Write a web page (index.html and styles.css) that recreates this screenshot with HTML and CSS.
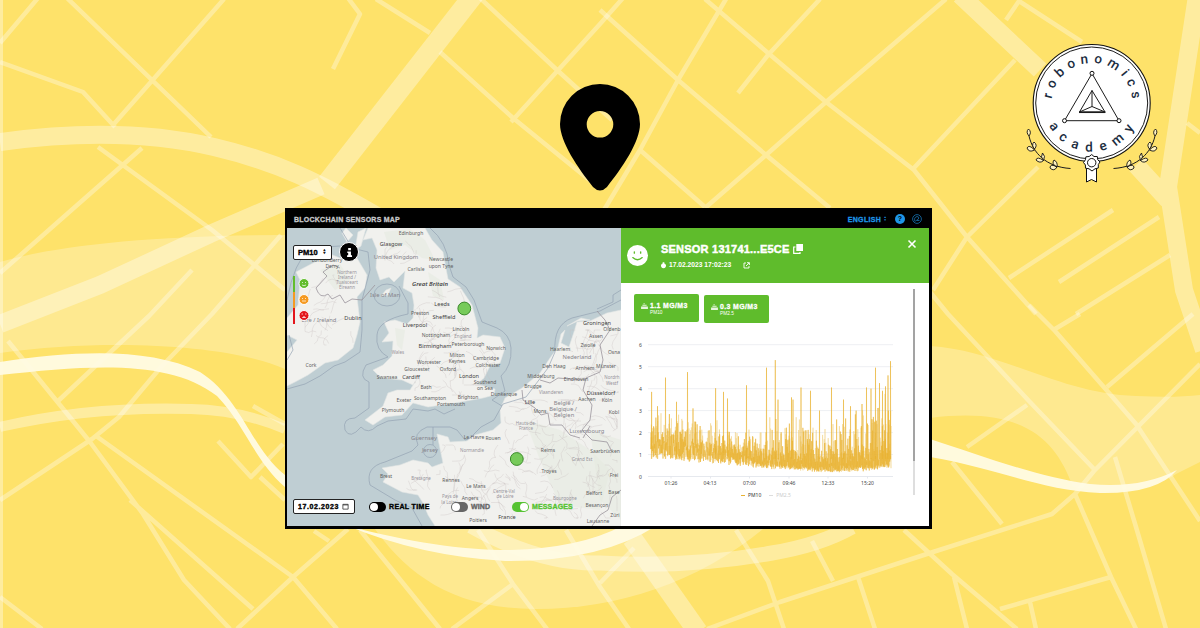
FILE: index.html
```html
<!DOCTYPE html>
<html lang="en">
<head>
<meta charset="utf-8">
<title>Blockchain Sensors Map</title>
<link rel="stylesheet" href="styles.css">
</head>
<body>
<svg class="backdrop" viewBox="0 0 1200 628" aria-hidden="true">
  <g class="river">
    <path d="M0 262Q90 236 285 235V369C230 345 110 338 0 353Z"/>
    <path d="M372 525C405 572 450 609 536 609C620 609 700 582 768 525Z"/>
    <path d="M930 346C1000 350 1060 394 1136 396Q1175 398 1200 395V462L1176 474C1150 492 1100 494 1073 487C1056 440 1025 406 930 418Z"/>
  </g>
  <g class="streets">
    <path d="M0 43L38-2M67-2L211 137M224-1L113 125M0 62L83 92L115 127M348-2L360 14L333 69M376-1L430 33M440 52L513 118L598 187M480-2L557 70L612 120M623-2L600 24L511 122M98 147L212 230L285 290M142 148L0 273M192 270L149 316L57 402M281 235L212 314L161 367L119 417L92 439L0 500M8 341L90 442L143 514L184 580L230 629M130 500L253 609M96 436L293 577L337 629M237 629L293 577L348 529M0 597L42 629M218 441L251 477L283 444M253 406L285 424M260 477L285 500M314 531L329 541M360 530L440 629M478 530L513 584L547 629M452 629L513 584M566 530L600 587L629 629"/>
    <path d="M600 10L678 80L766 155L830 208M705-1L768 53L826 102L914 170L967 237L1036 314M726-1L678 80L640 150L705 207M820-1L768 55L738 93M946-1L826 102L766 155L705 208M1015 60L912 170M1006 20L1019 1L1082 42M1038 167L967 237L933 290M1113 210L1009 278M1159 217L1059 282M1170 255L1076 314M1187 123L1200 133M640 150L592 230"/>
    <path d="M736 530L768 581L784 629M707 629L780 602L933 552L1052 514L1075 494L1094 471L1200 364M812 541L833 581M858 577L875 629M904 530L952 574L1017 629M954 577L967 629M1000 609L1111 577M1030 602L1036 629M1075 494L1111 577L1136 629M1115 457L1136 527L1166 629M930 292L948 314L1029 401L1094 469M1027 405L967 447M952 462L1002 524M1029 305L1055 331L1136 424L1200 521M1055 329L1080 314M1193 314L1107 387M600 583L634 548"/>
  </g>
  <g class="avenues">
    <path class="w18" d="M0 142C80 131 150 132 214 147S320 183 377 216"/>
    <path class="w20" d="M476-8L327 183"/>
    <path class="w18" d="M321 186L210 234L100 285L0 324"/>
    <path class="w10" d="M0 427Q90 406 191 409Q240 410 285 429"/>
    <path class="w18" d="M960-5L1040 70M1197-4L1168 187L1184 290L1204 350M1136 165L1168 200"/>
    <path class="w14" d="M471 526Q540 565 600 563Q690 568 772 553Q820 545 852 527"/>
    <path class="w20" d="M632 538L698 632"/>
    <path class="w4" d="M1.5 0V628"/>
  </g>
  <path class="stream" d="M0 362C80 350 150 348 200 372C242 399 250 447 285 475V487C254 460 245 425 217 396C170 359 90 365 0 375Z"/>
  <path class="stream" d="M348 526C410 542 460 550 510 550Q580 548 622 526L656 526Q600 562 505 561Q420 556 348 526Z"/>
  <path class="stream" d="M930 439C980 455 1040 478 1090 484Q1140 489 1177 470Q1157 494 1100 493C1040 490 1000 469 930 457Z"/>
</svg>

<svg class="pin" viewBox="0 0 80 107" aria-hidden="true">
  <path fill-rule="evenodd" d="M40 0A40 40 0 0 0 0 40C0 58 18 84 33 103Q40 110 47 103C62 84 80 58 80 40A40 40 0 0 0 40 0ZM40 27A13.300 13.300 0 1 1 40 53.600A13.300 13.300 0 0 1 40 27Z"/>
</svg>

<svg class="logo" viewBox="1022 40 140 146">
  <defs>
    <path id="arc-top" d="M1051.500 103.500A40.500 40.500 0 0 1 1132.500 103.500"/>
    <path id="arc-low" d="M1043.500 103A48.500 48.500 0 0 0 1140.500 103"/>
  </defs>
  <circle class="disc" cx="1091.700" cy="103" r="58.500"/>
  <circle class="line" cx="1091.700" cy="103" r="56"/>
  <text class="ring top"><textPath href="#arc-top" startOffset="52%">robonomics</textPath></text>
  <text class="ring low"><textPath href="#arc-low" startOffset="52%">academy</textPath></text>
  <path class="line" d="M1092 73.500L1064.500 120.700H1119ZM1092 90.500L1079.500 112H1105ZM1092 90.500V106.500L1079.500 112M1092 106.500L1105 112"/>
  <path class="line bold" d="M1079 112.300H1105.500"/>
  <g class="node"><circle cx="1092" cy="73.300" r="2"/><circle cx="1064.500" cy="120.700" r="2"/><circle cx="1119" cy="120.700" r="2"/></g>
  <g id="branch" class="line">
    <path d="M1029 136C1033 153 1046 167 1070.500 168.500"/>
    <path class="leaf" d="M1029 136Q1025.500 132 1028.500 129Q1032 132 1029 136ZM1034.500 150Q1029 144 1027 148Q1029 153 1034.500 150ZM1034.500 149Q1038 145 1034 142Q1031 145 1034.500 149ZM1043.500 160.500Q1037 156 1036 160Q1040 164 1043.500 160.500ZM1043.500 160.500Q1046 156 1042.500 153Q1040 157 1043.500 160.500ZM1057 167Q1050 163 1050 168Q1054 172 1057 167ZM1057 167Q1058 162 1054 160Q1051 164 1057 167Z"/>
  </g>
  <use href="#branch" transform="translate(2184 0) scale(-1 1)"/>
  <path class="leaf" d="M1086.500 168V182L1091.500 179.500L1096.500 182V168Z"/>
  <path class="leaf" d="M1091.700 154.500L1094 156.500L1097.300 156.500L1097.800 159.800L1100 162L1098.300 164.500L1098.300 168L1095 168.800L1092 171L1089 168.800L1085.500 168.200L1085.400 165L1083.500 162.500L1085.400 159.800L1085.900 156.800L1089.200 156.500Z"/>
  <circle class="leaf" cx="1091.700" cy="162.700" r="4.200"/>
</svg>

<main class="window">
  <header class="topbar">
    <h1>BLOCKCHAIN SENSORS MAP</h1>
    <nav>
      <span class="lang">ENGLISH</span><span class="updown">▴<br>▾</span>
      <span class="help">?</span>
      <svg class="swirl" viewBox="0 0 10 10"><circle cx="5" cy="5" r="4.400"/><path d="M3 7.500Q1.500 3.500 5 2.500Q7.500 2.500 6.500 5L3.500 7M5 6.500L7.500 6.500"/></svg>
    </nav>
  </header>
  <div class="content">
    <section class="mapview">
      <svg class="map" viewBox="287 228 334 298">
        <g class="land">
          <path d="M368 228L363 240L372 238L377 250L376 268L380 280L389 277L394 282L405 271L403 288L412 293L414 305L413 318L407 324L395 320L384 322L389 333L382 342L393 341L392 356L383 365L373 370L381 378L402 380L413 385L417 379L410 390L397 390L388 393L383 406L365 420L373 425L385 417L402 415L413 403L428 407L455 403L483 398L494 395L495 389L477 384L484 378L490 366L500 363L505 348L500 337L483 335L477 338L478 328L472 305L460 287L448 279L443 252L432 240L425 228Z"/>
          <path d="M315 262L330 254L345 260L357 258L367 275L365 288L357 297L360 322L357 335L353 348L338 360L325 363L308 375L295 382L287 386V352L297 340L287 335V318L298 305L300 280L296 272Z"/>
          <path d="M621 310L607 313L590 321L577 322L574 332L569 347L561 343L565 330L561 334L558 347L550 358L540 373L522 388L505 398L500 410L501 423L493 430L475 435L467 441L450 442L448 437L437 434L443 463L432 467L428 463L413 460L400 465L382 468L388 474L383 482L402 492L418 495L423 503L428 515L435 526H621Z"/>
          <path d="M381 296L386 290L391 288L388 295ZM346 228L353 235L347 242L342 233ZM358 232L366 228L361 246L355 250ZM567 326L578 321L590 320L581 318Z"/>
        </g>
        <g class="hills">
          <path d="M384 232L410 229L425 240L435 260L422 258L405 245L390 250Z"/><path d="M428 272L440 280L444 300L433 296Z"/><path d="M395 328L405 330L402 350L397 345Z"/>
          <path d="M525 420L560 430L590 450L610 470L600 510L560 505L540 460Z"/><path d="M590 430L621 440V520L600 500Z"/><path d="M320 270L340 264L350 280L335 290Z"/>
        </g>
        <g class="roads" id="roads"></g>
        <g class="limits">
          <path d="M340 228L352 248L368 252L370 270L362 300L362 330L360 352L345 362L334 366L320 376L305 384L287 389"/>
          <path d="M287 300Q294 262 310 248L340 246M430 228Q447 242 449 265L453 277L466 287L474 300L482 322L497 328Q510 334 511 348Q512 366 501 376L505 391L492 400L502 406"/>
          <path d="M503 404L494 420L481 427L470 438L465 440L457 430L450 427L427 427Q412 433 418 445L412 451L385 462Q365 467 370 485L395 500L412 508L422 526M433 427V445M503 404L526 397L548 368L555 352Q553 325 572 318L600 311L621 300"/>
          <path d="M455 409L444 414L435 409L428 411L413 409L406 419L388 421L377 426Q368 435 361 427Q350 440 345 430Q342 418 355 418L369 408V382Q358 378 366 365L388 357Q375 350 377 335Q378 320 408 314L408 303L399 286"/>
          <ellipse cx="387" cy="295" rx="13" ry="11"/><circle cx="430" cy="451" r="6.500"/>
          <path d="M621 290L613 295V302L597 309"/><path d="M287 360L293 350L289 335"/>
        </g>
        <g class="borders">
          <path d="M316 288L327 276L323 272L333 265L340 268M316 288Q320 300 328 294L332 299L340 295L345 303L352 299L362 300L375 285M597 311L605 320L610 330L600 345L603 360L600 372L586 378L583 390L592 405L590 420L582 430L592 440L607 442L612 452M540 380L550 383L558 378L583 380M522 390L523 400L535 408L541 415L548 413L550 425L562 425L570 435L580 438M583 438L590 426M592 526L600 515L608 510L612 497L621 490"/>
        </g>
        <g class="labels">
          <text x="411" y="235">Edinburgh</text><text x="391" y="246" class="c">Glasgow</text><text x="396" y="259" class="u">United Kingdom</text>
          <text x="441" y="261">Newcastle</text><text x="441" y="268">upon Tyne</text><text x="416" y="271">Carlisle</text>
          <text x="430" y="286" class="gb">Great Britain</text><text x="385" y="297" class="u">Isle of Man</text><text x="442" y="306" class="c">Leeds</text>
          <text x="420" y="315">Preston</text><text x="444" y="319" class="c">Sheffield</text><text x="415" y="327" class="c">Liverpool</text><text x="461" y="331">Lincoln</text>
          <text x="436" y="337">Nottingham</text><text x="463" y="338" class="t">England</text><text x="435" y="348" class="c">Birmingham</text><text x="468" y="346">Peterborough</text>
          <text x="496" y="350">Norwich</text><text x="429" y="364">Worcester</text><text x="457" y="357">Milton</text><text x="457" y="363">Keynes</text><text x="486" y="360">Cambridge</text>
          <text x="417" y="371">Gloucester</text><text x="448" y="371">Oxford</text><text x="488" y="367">Colchester</text><text x="387" y="379">Swansea</text><text x="411" y="379" class="c">Cardiff</text><text x="469" y="378" class="c">London</text><text x="485" y="384">Southend</text><text x="485" y="390">on Sea</text><text x="426" y="389">Bath</text><text x="398" y="354" class="t">Wales</text>
          <text x="404" y="402">Exeter</text><text x="430" y="400">Southampton</text><text x="468" y="399">Brighton</text><text x="451" y="406">Portsmouth</text><text x="393" y="412">Plymouth</text>
          <text x="327" y="262">Londonderry</text><text x="332" y="268">Derry</text><text x="347" y="274" class="t">Northern</text><text x="347" y="279" class="t">Ireland /</text><text x="347" y="284" class="t">Tuaisceart</text><text x="347" y="289" class="t">Éireann</text>
          <text x="319" y="322" class="u">Éire / Ireland</text><text x="353" y="320" class="c">Dublin</text><text x="311" y="367">Cork</text>
          <text x="424" y="440" class="u">Guernsey</text><text x="430" y="452" class="u">Jersey</text><text x="386" y="478">Brest</text><text x="421" y="480" class="t">Bretagne</text><text x="451" y="482">Rennes</text><text x="476" y="488">Le Mans</text><text x="450" y="498" class="t">Pays de</text><text x="449" y="504" class="t">la Loire</text><text x="470" y="500">Angers</text><text x="478" y="522">Poitiers</text>
          <text x="474" y="439">Le Havre</text><text x="493" y="440">Rouen</text><text x="472" y="452" class="t">Normandie</text><text x="526" y="425" class="t">Hauts-de-</text><text x="526" y="430" class="t">France</text>
          <text x="504" y="396">Dunkerque</text><text x="530" y="404" class="c">Lille</text><text x="540" y="413">Mons</text><text x="564" y="405" class="n">België /</text><text x="563" y="411" class="n">Belgique /</text><text x="564" y="417" class="n">Belgien</text><text x="551" y="394" class="t">Vlaanderen</text><text x="533" y="388">Brugge</text><text x="541" y="378">Middelburg</text>
          <text x="554" y="368">Den Haag</text><text x="585" y="370">Arnhem</text><text x="606" y="368">Münster</text><text x="576" y="381">Eindhoven</text><text x="601" y="395" class="c">Düsseldorf</text><text x="587" y="401">Aachen</text><text x="607" y="402">Köln</text><text x="577" y="359" class="n">Nederland</text><text x="597" y="325" class="c">Groningen</text><text x="596" y="338">Assen</text><text x="588" y="347">Zwolle</text><text x="560" y="351">Haarlem</text><text x="612" y="331">Oldenb</text><text x="614" y="354">Osna</text>
          <text x="587" y="433" class="n">Luxembourg</text><text x="605" y="453">Saarbrücken</text><text x="548" y="452">Reims</text><text x="549" y="473">Troyes</text><text x="582" y="461" class="t">Grand Est</text><text x="504" y="493" class="t">Centre-Val</text><text x="505" y="498" class="t">de Loire</text><text x="507" y="519" class="c">France</text><text x="565" y="500" class="t">Bourgogne</text><text x="594" y="495">Belfort</text><text x="597" y="507">Besançon</text><text x="614" y="477">Frei</text><text x="614" y="494">Base</text><text x="615" y="517">Züri</text><text x="598" y="523">Lausanne</text><text x="614" y="414">Kobl</text><text x="612" y="379" class="t">Nordrh</text><text x="612" y="385" class="t">Westf</text>
        </g>
        <g class="markers"><circle cx="464.300" cy="308.500" r="6.400"/><circle cx="516.800" cy="459" r="6.400"/></g>
      </svg>
      <div class="overlay">
        <div class="row">
          <div class="select">PM10 <span class="updown">▴<br>▾</span></div>
          <div class="info"><svg viewBox="0 0 10 10"><path d="M3.800 1h2.500v2H3.800zM3 4h3.300v3.600h1V9H2.800V7.600h1V5.400H3z"/></svg></div>
        </div>
        <div class="scale">
          <div class="g"><svg class="face" viewBox="0 0 12 12"><circle cx="6" cy="6" r="5"/><path d="M4 5h1M7 5h1M4 7.500Q6 9 8 7.500"/></svg></div>
          <div class="o"><svg class="face" viewBox="0 0 12 12"><circle cx="6" cy="6" r="5"/><path d="M4 5h1M7 5h1M4 7.500H8"/></svg></div>
          <div class="r"><svg class="face" viewBox="0 0 12 12"><circle cx="6" cy="6" r="5"/><path d="M3.500 4.500h1.500M7 4.500h1.500M4.500 8Q6 6 7.500 8Z"/></svg></div>
        </div>
        <div class="controls">
          <div class="date">17.02.2023 <svg viewBox="0 0 8 8"><path d="M1 1.500H7V7H1ZM1 2.200H7"/></svg></div>
          <label class="switch real"><i></i><span>REAL TIME</span></label>
          <label class="switch wind"><i></i><span>WIND</span></label>
          <label class="switch msgs"><i></i><span>MESSAGES</span></label>
        </div>
      </div>
    </section>
    <aside class="panel">
      <div class="head">
        <svg class="smile" viewBox="0 0 20 20"><circle cx="10" cy="10" r="10"/><path d="M7 6.500v1.300M13 6.500v1.300M5.500 12Q10 16 14.500 12"/></svg>
        <div class="titles">
          <h2>SENSOR 131741...E5CE <svg class="copy" viewBox="0 0 10 10"><path class="f" d="M3.300 0H10V7H3.300Z"/><path class="s" d="M2.500 3H.7V9.300H7V8"/></svg></h2>
          <p><svg class="clock" viewBox="0 0 6 8"><path d="M2 0H4V1.500A3 3 0 1 1 2 1.500Z"/></svg><span>17.02.2023 17:02:23</span><svg class="ext" viewBox="0 0 7 7"><path d="M3 1H1V6H6V4M4 .7H6.400V3M6.200 .9L3 4"/></svg></p>
        </div>
        <svg class="close" viewBox="0 0 10 10"><path d="M1.500 1.500L8.500 8.500M8.500 1.500L1.500 8.500"/></svg>
      </div>
      <div class="body">
        <div class="main">
          <div class="cards">
            <div class="card"><b><svg viewBox="0 0 8 7"><path d="M0 4H8V7H0ZM1.500 2H6.500V3.300H1.500ZM3 0H4V1.500H3Z"/></svg>1.1 ΜG/M3</b><small>PM10</small></div>
            <div class="card"><b><svg viewBox="0 0 8 7"><path d="M0 4H8V7H0ZM1.500 2H6.500V3.300H1.500ZM3 0H4V1.500H3Z"/></svg>0.3 ΜG/M3</b><small>PM2.5</small></div>
          </div>
          <svg class="chart" viewBox="634 335 268 155">
            <path class="grid" d="M648 344.700H893M648 366.700H893M648 388.700H893M648 410.600H893M648 432.600H893M648 454.500H893"/>
            <path class="axis" d="M648 476.500H893M671 476.500v2M710.500 476.500v2M749.500 476.500v2M789 476.500v2M828 476.500v2M867.500 476.500v2"/>
            <g class="ylab"><text x="640.500" y="346.700">6</text><text x="640.500" y="368.700">5</text><text x="640.500" y="390.700">4</text><text x="640.500" y="412.700">3</text><text x="640.500" y="434.700">2</text><text x="640.500" y="456.500">1</text><text x="640.500" y="478.500">0</text></g>
            <path class="series pale" id="pale"/>
            <path class="series" id="series"/>
            <g class="xlab"><text x="671" y="485">01:26</text><text x="710" y="485">04:13</text><text x="749.500" y="485">07:00</text><text x="789" y="485">09:46</text><text x="828" y="485">12:33</text><text x="867.500" y="485">15:20</text></g>
          </svg>
          <div class="legend"><span><i></i>PM10</span><span class="off"><i></i>PM2.5</span></div>
        </div>
        <div class="scroll"></div>
      </div>
    </aside>
  </div>
</main>
<script src="script.js"></script>
</body>
</html>
```
FILE: styles.css
```css
* { box-sizing: border-box; }
body {
  margin: 0; width: 1200px; height: 628px; overflow: hidden; position: relative;
  background: #fee26a; font-family: "Liberation Sans", Arial, sans-serif;
  display: flex; flex-direction: column; align-items: center; padding-top: 84px;
}
svg { display: block; flex: none; }
.backdrop { position: absolute; left: 0; top: 0; width: 1200px; height: 628px; fill: none; stroke: #fff; }
.river { fill: #fff; fill-opacity: .26; stroke: none; }
.streets { stroke-width: 4.5; stroke-opacity: .33; stroke-linejoin: round; }
.avenues { stroke-opacity: .36; }
.w4 { stroke-width: 3; } .w10 { stroke-width: 10; } .w14 { stroke-width: 15; } .w18 { stroke-width: 18; } .w20 { stroke-width: 20; }
.stream { fill: #fffbe4; stroke: none; fill-opacity: .94; }
.pin { width: 80px; height: 107px; position: relative; }
.logo { position: absolute; left: 1022px; top: 40px; width: 140px; height: 146px; }
.disc { fill: #fff; stroke: #111; stroke-width: 1.1; }
.line { fill: none; stroke: #1b1b1b; stroke-width: 1; }
.bold { stroke-width: 1.5; }
.node { fill: #fff; stroke: #111; stroke-width: 1; }
.leaf { fill: #fff; stroke: #111; stroke-width: 1; }
.line .leaf { fill: #fff3c0; stroke-width: .9; }
.ring { font-family: Roboto, sans-serif; font-weight: 500; font-size: 13.5px; fill: #1c2d3f; text-anchor: middle; }
.ring.top { letter-spacing: 5.1px; }
.ring.low { letter-spacing: 8px; }

.window {
  position: relative; width: 647px; height: 321px; margin: 17px 0 0 17px; background: #000;
  padding: 0 3px 3px 2px; display: flex; flex-direction: column;
}
.topbar { height: 20px; display: flex; justify-content: space-between; align-items: center; padding: 2px 7px 0 7px; }
h1 { margin: 0; font-size: 7px; font-weight: 700; color: #c8cacc; letter-spacing: .24px; white-space: nowrap; -webkit-text-stroke: .3px; }
nav { display: flex; align-items: center; color: #1e96e8; }
.lang { font-size: 7px; font-weight: 700; letter-spacing: .35px; -webkit-text-stroke: .3px; }
.updown { font-size: 3.500px; line-height: 3px; margin-left: 3px; font-family: "DejaVu Sans", sans-serif; }
.help { width: 10px; height: 10px; border-radius: 50%; background: #1e96e8; color: #000; font-size: 7px; font-weight: 700; line-height: 10px; text-align: center; margin: 0 7px 0 9px; }
.swirl { width: 10px; height: 10px; fill: none; stroke: #1773b4; stroke-width: .8; }
.content { flex: 1; display: flex; min-height: 0; }
.mapview { width: 334px; display: grid; overflow: hidden; }
.mapview > * { grid-area: 1 / 1; }
.map { width: 334px; height: 298px; background: #bfced3; }
.land { fill: #f1f1ee; stroke: #e3e6e4; stroke-width: .6; }
.hills { fill: #e4e9dd; fill-opacity: .5; }
.roads { fill: none; stroke: #c9bfc0; stroke-width: .5; stroke-opacity: .65; }
.limits { fill: none; stroke: #93a1b2; stroke-width: .8; stroke-opacity: .85; stroke-linejoin: round; }
.borders { fill: none; stroke: #9a949c; stroke-width: .8; stroke-linejoin: round; }
.labels { font: 5px "Noto Sans", sans-serif; fill: #5e5e60; text-anchor: middle; }
.labels .c { font-size: 5.6px; fill: #444; }
.labels .u, .labels .n { font-size: 5.8px; fill: #85838a; }
.labels .t { font-size: 4.500px; fill: #97949c; }
.labels .gb { font-size: 6px; font-weight: 600; font-style: italic; fill: #444; }
.markers { fill: #69c649; stroke: #3c8a2c; stroke-width: 1; fill-opacity: .9; }
.overlay { z-index: 1; display: flex; flex-direction: column; padding: 14px 0 12px 6px; font-weight: 700; -webkit-text-stroke: .35px; }
.row { display: flex; align-items: center; gap: 7px; }
.select, .date { border: 1px solid #222; border-radius: 2px; background: #fff; color: #000; display: flex; align-items: center; }
.select { width: 39px; height: 15px; font-size: 7.500px; padding-left: 4px; }
.select .updown { margin-left: 6px; }
.info { width: 20px; height: 20px; border: 1px solid #fff; border-radius: 50%; background: #000; display: grid; place-items: center; }
.info svg { width: 11px; height: 11px; fill: #fff; }
.scale { margin-top: 14px; }
.scale div { height: 16px; border-left: 2px solid; padding-left: 3px; }
.scale .g { color: #62bd2d; } .scale .o { color: #f59a22; } .scale .r { color: #e3161c; }
.face { width: 12px; height: 15px; }
.face circle { fill: currentColor; stroke: #fff; stroke-width: 1; }
.face path { fill: none; stroke: #fff; stroke-width: .9; opacity: .8; }
.controls { margin-top: auto; display: flex; align-items: center; font-size: 7px; }
.date { width: 62px; height: 15px; font-size: 7px; padding-left: 4px; gap: 3px; letter-spacing: .6px; }
.date svg { width: 7px; height: 7px; fill: none; stroke: #333; stroke-width: .9; }
.switch { display: flex; align-items: center; gap: 3px; white-space: nowrap; }
.switch i { width: 17px; height: 10px; border-radius: 5px; background: currentColor; padding: 1px; display: flex; }
.switch i::before { content: ""; width: 8px; height: 8px; border-radius: 50%; background: #fff; }
.real { margin-left: 14px; width: 82px; color: #000; letter-spacing: .35px; }
.wind { width: 61px; color: #666; letter-spacing: .1px; }
.msgs { color: #56c332; letter-spacing: .15px; }
.msgs i { justify-content: flex-end; }

.panel { flex: 1; background: #fff; display: flex; flex-direction: column; min-width: 0; }
.head { height: 55px; background: #5fbc2c; color: #fff; display: flex; padding: 0 12px 0 6px; }
.smile { width: 21px; height: 21px; margin-top: 17px; fill: #fff; }
.smile path { fill: none; stroke: #5fbc2c; stroke-width: 1.3; stroke-linecap: round; }
.titles { margin: 14px 0 0 13px; flex: 1; }
h2 { margin: 0; font-size: 11px; line-height: 14px; font-weight: 700; letter-spacing: .22px; -webkit-text-stroke: .45px; display: flex; align-items: center; gap: 3px; white-space: nowrap; }
.copy { width: 10px; height: 10px; }
.copy .f { fill: #fff; } .copy .s { fill: none; stroke: #fff; stroke-width: 1.2; }
.titles p { margin: 4px 0 0; font-size: 6.700px; line-height: 10px; font-weight: 700; display: flex; align-items: center; white-space: nowrap; }
.clock { width: 5px; height: 7px; fill: #fff; margin-right: 3px; }
.ext { width: 7px; height: 7px; margin-left: 12px; fill: none; stroke: #fff; stroke-width: .9; }
.close { width: 10px; height: 10px; margin-top: 11px; stroke: #fff; stroke-width: 1.6; }
.body { flex: 1; display: flex; padding: 6px 14px 0 13px; }
.main { width: 268px; }
.cards { display: flex; gap: 5px; padding-top: 5px; }
.card { width: 65px; height: 28px; border-radius: 2px; background: #5fbc2c; color: #fff; padding: 7px 0 0 7px; }
.card + .card { margin-top: 1px; }
.card b { display: flex; align-items: center; gap: 2px; font-size: 6.900px; line-height: 9px; font-weight: 700; letter-spacing: .4px; -webkit-text-stroke: .3px; white-space: nowrap; }
.card svg { width: 7px; height: 6px; fill: #fff; opacity: .85; }
.card small { display: block; font-size: 4.800px; line-height: 5px; margin-left: 9px; }
.chart { width: 268px; height: 155px; margin-top: 12px; }
.grid, .axis { stroke: #e9ebef; stroke-width: .8; }
.axis { stroke: #dfe3ea; }
.series { fill: none; stroke: #e9b230; stroke-width: .55; stroke-linejoin: bevel; }
.pale { stroke: #f0cd7c; stroke-width: .45; }
.ylab, .xlab { font: 5px "Noto Sans", sans-serif; fill: #444; text-anchor: middle; }
.legend { display: flex; gap: 8px; height: 6px; margin: 2px 0 0 107px; font: 5px/7px "Noto Sans", sans-serif; color: #333; }
.legend i { display: inline-block; width: 4px; height: 1px; background: #e9b230; vertical-align: middle; margin-right: 3px; }
.legend .off { color: #ccc; } .legend .off i { background: #ddd; }
.scroll { margin-left: 11px; width: 3px; height: 206px; background: linear-gradient(#a3a3a3 0 172px, #dedede 172px); }
```
FILE: script.js
```js
// Seeded generator keeps the drawing stable between loads.
let seed = 11;
const rnd = () => (seed = (seed * 16807) % 2147483647) / 2147483647;

// Piecewise envelopes over the plot width: [x, value].
const lowEnv = [[651, 1.15], [680, .9], [720, .75], [760, .5], [800, .35], [830, .25], [855, .3], [891, .45]];
const midEnv = [[651, 2.1], [665, 1.9], [700, 1.7], [745, 1.3], [770, 1.5], [800, 1.5], [835, 1.2], [860, 1.5], [891, 1.9]];
const topEnv = [[651, 3], [690, 3], [720, 2.8], [745, 2], [757, 2.2], [775, 3], [800, 2.8], [812, 2.4], [826, 3.1], [850, 3], [870, 3.5], [891, 4]];
const peaks = [[651.6, 3.85], [657.5, 3.2], [665.5, 4.5], [676.5, 3.4], [687.5, 4.75], [693, 3.1], [715.6, 4.02], [723.5, 3.85], [727.5, 3.55], [746.5, 4.15], [766.5, 4.95], [775.3, 5.3], [778, 3.5], [791.5, 3.6], [793, 3.5], [801, 4.05], [810.5, 3.9], [819.5, 3], [831.5, 4.05], [843.5, 3.5], [850.5, 3.2], [862, 3.3], [866.5, 4.05], [871, 4], [875.5, 4.95], [879.5, 4.25], [882.5, 3.9], [885.5, 4.1], [888, 4.6], [890.5, 5.25]];
const at = (t, x) => {
  for (let i = 1; i < t.length; i++) if (x <= t[i][0]) {
    const [a, b] = [t[i - 1], t[i]];
    return a[1] + (b[1] - a[1]) * (x - a[0]) / (b[0] - a[0]);
  }
  return t[t.length - 1][1];
};
const Y = v => (476.5 - v * 21.97).toFixed(1);
const wave = (step, spread) => {
  let d = "M651 " + Y(2), gust = 1;
  for (let x = 651; x < 891; x += step) {
    if (rnd() < .3) gust = .72 + rnd() * .5;
    const lo = at(lowEnv, x), mid = at(midEnv, x);
    const hi = lo + (mid - lo) * gust * (.25 + rnd() * .75) + (rnd() < spread ? (at(topEnv, x) - mid) * rnd() : 0);
    d += `L${x.toFixed(2)} ${Y(lo * (.7 + rnd() * rnd() * 1.1 + rnd() * .3))}L${(x + step / 2).toFixed(2)} ${Y(hi)}`;
  }
  return d;
};
document.getElementById("pale").setAttribute("d", wave(.8, .6));
let line = wave(.75, .38);
for (const [x, v] of peaks) line += `M${x - .2} ${Y(.8)}L${x} ${Y(v)}L${x + .2} ${Y(.8)}`;
document.getElementById("series").setAttribute("d", line);

// Minor roads: short wandering strokes inside each land area.
const areas = [[415, 285, 50, 110, 46], [385, 236, 40, 30, 8], [455, 340, 40, 45, 18], [305, 275, 48, 70, 22], [505, 400, 112, 118, 120], [440, 445, 70, 70, 40], [570, 330, 48, 70, 40], [400, 470, 40, 20, 8]];
let roads = "";
for (const [ax, ay, w, h, n] of areas) for (let i = 0; i < n; i++) {
  let x = ax + rnd() * w, y = ay + rnd() * h, a = rnd() * 6.28;
  roads += `M${x.toFixed(1)} ${y.toFixed(1)}`;
  for (let k = 0; k < 4; k++) {
    a += rnd() * 1.4 - .7;
    x = Math.min(ax + w, Math.max(ax, x + Math.cos(a) * 4)); y = Math.min(ay + h, Math.max(ay, y + Math.sin(a) * 4));
    roads += `L${x.toFixed(1)} ${y.toFixed(1)}`;
  }
}
const p = document.createElementNS("http://www.w3.org/2000/svg", "path");
p.setAttribute("d", roads);
document.getElementById("roads").append(p);
```
